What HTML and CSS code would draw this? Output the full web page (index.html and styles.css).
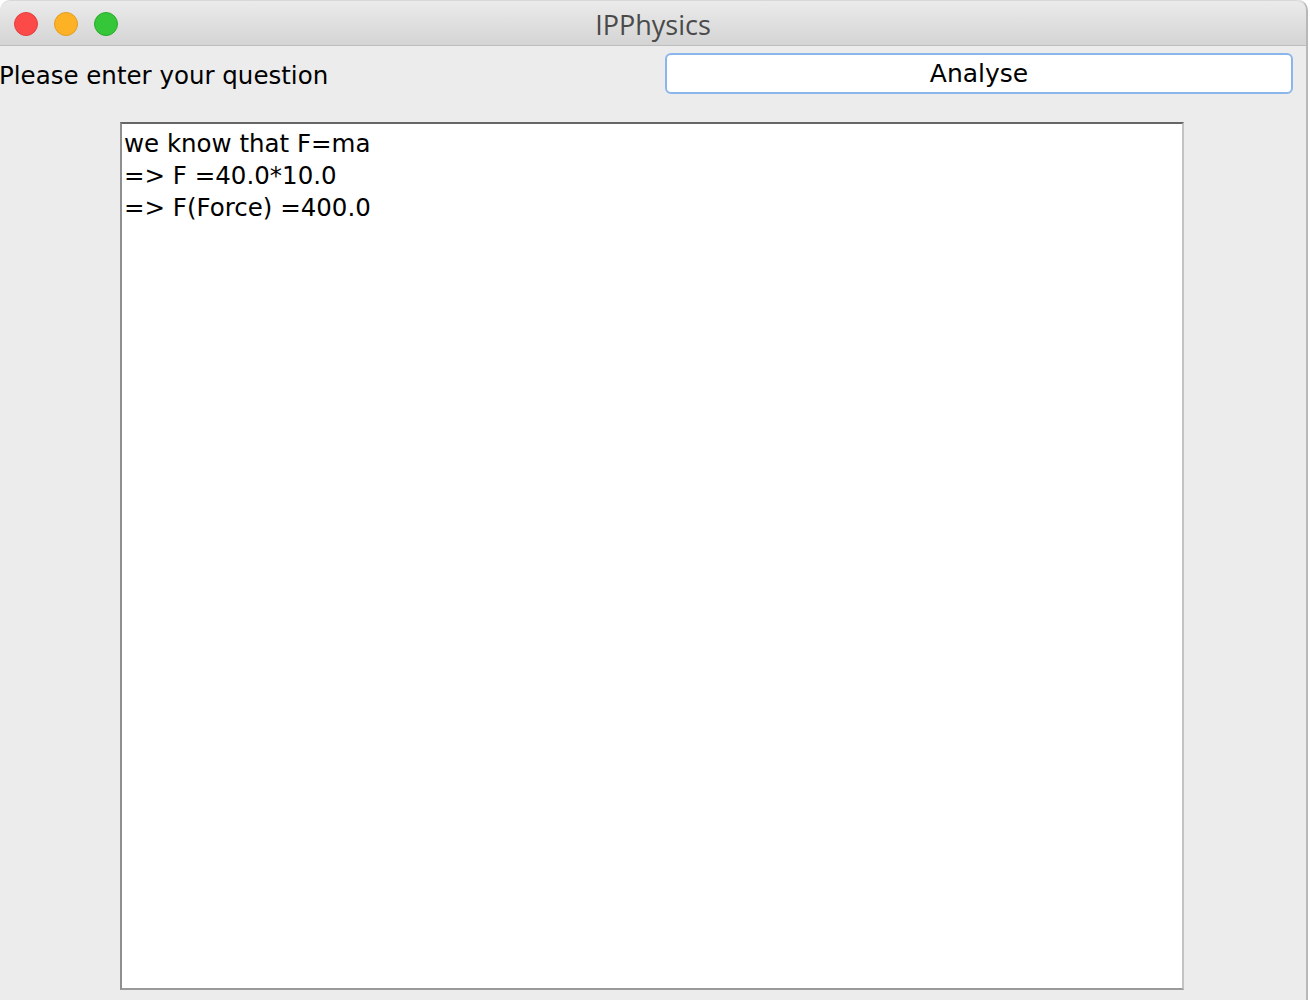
FILE: index.html
```html
<!DOCTYPE html>
<html>
<head>
<meta charset="utf-8">
<link rel="stylesheet" href="styles.css">
</head>
<body>
<div class="window">
  <div class="titlebar">
    <div class="lights">
      <span class="light red"></span>
      <span class="light yellow"></span>
      <span class="light green"></span>
    </div>
    <div class="title">IPPhysics</div>
  </div>
  <div class="content">
    <div class="toprow">
      <div class="label">Please enter your question</div>
      <button class="btn">Analyse</button>
    </div>
    <div class="area">
      <div class="line">we know that F=ma</div>
      <div class="line">=&gt; F =40.0*10.0</div>
      <div class="line">=&gt; F(Force) =400.0</div>
    </div>
  </div>
</div>
</body>
</html>
```
FILE: styles.css
```css
html, body {
  margin: 0;
  padding: 0;
  background: #ffffff;
  width: 1310px;
  height: 1000px;
  overflow: hidden;
}
.window {
  width: 1306px;
  height: 1000px;
  background: #ececec;
  border-right: 2px solid #b8b8b8;
  border-top-left-radius: 10px;
  border-top-right-radius: 10px;
  overflow: hidden;
  box-sizing: content-box;
}
.titlebar {
  background: linear-gradient(#ebebeb, #d4d4d4);
  border-bottom: 1px solid #bdbdbd;
  border-top: 1px solid #d8d8d8;
  border-top-left-radius: 10px;
  border-top-right-radius: 10px;
  position: relative;
  display: flex;
  align-items: center;
  justify-content: center;
  box-sizing: border-box;
  height: 46px;
}
.lights {
  position: absolute;
  left: 14px;
  top: 11px;
  display: flex;
  gap: 16px;
}
.light {
  width: 24px;
  height: 24px;
  border-radius: 50%;
  box-sizing: border-box;
}
.red { background: #fc4a49; border: 1px solid #e1403f; }
.yellow { background: #fdb124; border: 1px solid #df9e25; }
.green { background: #35c63a; border: 1px solid #2aab2e; }
.title {
  font-family: "Open Sans", "DejaVu Sans", sans-serif;
  font-size: 27px;
  color: #4a4a4a;
  margin-top: 3px;
}
.content {
  font-family: "DejaVu Sans", sans-serif;
  color: #000;
}
.toprow {
  display: flex;
  align-items: center;
  height: 58px;
  position: relative;
}
.label {
  font-size: 24.5px;
  margin-top: 1px;
  margin-left: -1px;
}
.btn {
  position: absolute;
  left: 665px;
  top: 7px;
  width: 628px;
  height: 41px;
  background: #ffffff;
  border: 2px solid #8ab6ec;
  border-radius: 6px;
  font-family: "DejaVu Sans", sans-serif;
  font-size: 25px;
  color: #000;
  padding: 0;
  box-sizing: border-box;
}
.area {
  margin-left: 120px;
  margin-top: 18px;
  width: 1064px;
  height: 868px;
  background: #fff;
  box-sizing: border-box;
  border-top: 2px solid #666666;
  border-left: 2px solid #8f8f8f;
  border-right: 2px solid #c3c3c3;
  border-bottom: 2px solid #9a9a9a;
  padding: 4px 0 0 2px;
  font-size: 24.5px;
  line-height: 32px;
}
```
